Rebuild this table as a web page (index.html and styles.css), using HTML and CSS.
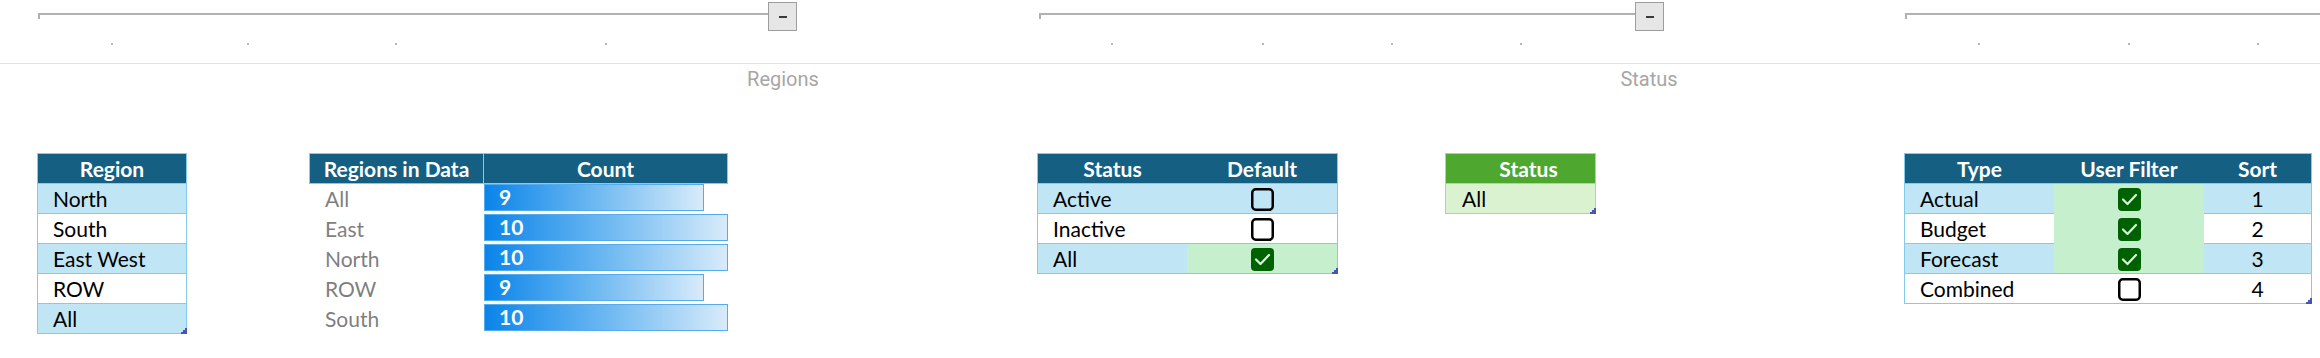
FILE: index.html
```html
<!DOCTYPE html>
<html>
<head>
<meta charset="utf-8">
<link rel="stylesheet" href="styles.css">
</head>
<body>
<div class="outline">
  <div class="bars">
    <div class="grp g1"><div class="ln"></div><div class="btn"><span></span></div></div>
    <div class="grp g2"><div class="ln"></div><div class="btn"><span></span></div></div>
    <div class="grp g3"><div class="ln"></div></div>
  </div>
  <div class="dots cols">
    <i></i><i class="d"></i><i class="d"></i><i class="d"></i><i class="d"></i><i></i>
    <i class="d"></i><i class="d"></i><i class="d"></i><i class="d"></i><i></i>
    <i class="d"></i><i class="d"></i><i class="d"></i><i></i>
  </div>
</div>
<div class="labels">
  <span class="lbl l1">Regions</span>
  <span class="lbl l2">Status</span>
</div>

<div class="tables cols">
  <div class="tbl t-region">
    <div class="hd"><div class="c ctr">Region</div></div>
    <div class="r band"><div class="c">North</div></div>
    <div class="r"><div class="c">South</div></div>
    <div class="r band"><div class="c">East West</div></div>
    <div class="r"><div class="c">ROW</div></div>
    <div class="r band"><div class="c">All</div></div>
    <span class="handle"><svg width="6" height="6" viewBox="0 0 6 6"><polygon points="6,0 6,6 0,6 0,4 2,4 2,2 4,2 4,0" fill="#4654b4"/></svg></span>
  </div>

  <div class="t-data">
    <div class="hd2"><div class="c ctr sep">Regions in Data</div><div class="c ctr">Count</div></div>
    <div class="dr"><div class="c gray">All</div><div class="barcell"><div class="bar" style="width:90%">9</div></div></div>
    <div class="dr"><div class="c gray">East</div><div class="barcell"><div class="bar" style="width:100%">10</div></div></div>
    <div class="dr"><div class="c gray">North</div><div class="barcell"><div class="bar" style="width:100%">10</div></div></div>
    <div class="dr"><div class="c gray">ROW</div><div class="barcell"><div class="bar" style="width:90%">9</div></div></div>
    <div class="dr"><div class="c gray">South</div><div class="barcell"><div class="bar" style="width:100%">10</div></div></div>
  </div>

  <div class="tbl t-status">
    <div class="hd"><div class="c ctr">Status</div><div class="c ctr">Default</div></div>
    <div class="r band"><div class="c">Active</div><div class="cb"><svg width="23" height="23" viewBox="0 0 23 23"><rect x="1.25" y="1.25" width="20.5" height="20.5" rx="3.5" fill="none" stroke="#000" stroke-width="2.5"/></svg></div></div>
    <div class="r"><div class="c">Inactive</div><div class="cb"><svg width="23" height="23" viewBox="0 0 23 23"><rect x="1.25" y="1.25" width="20.5" height="20.5" rx="3.5" fill="none" stroke="#000" stroke-width="2.5"/></svg></div></div>
    <div class="r band"><div class="c">All</div><div class="cb good"><svg width="23" height="23" viewBox="0 0 23 23"><rect x="0" y="0" width="23" height="23" rx="4" fill="#006100"/><polyline points="5,11.5 9.5,16 18,7" fill="none" stroke="#d9f2dc" stroke-width="2.2" stroke-linecap="round" stroke-linejoin="round"/></svg></div></div>
    <span class="handle"><svg width="6" height="6" viewBox="0 0 6 6"><polygon points="6,0 6,6 0,6 0,4 2,4 2,2 4,2 4,0" fill="#4654b4"/></svg></span>
  </div>

  <div class="tbl t-green">
    <div class="hd"><div class="c ctr">Status</div></div>
    <div class="r"><div class="c">All</div></div>
    <span class="handle"><svg width="6" height="6" viewBox="0 0 6 6"><polygon points="6,0 6,6 0,6 0,4 2,4 2,2 4,2 4,0" fill="#4654b4"/></svg></span>
  </div>

  <div class="tbl t-type">
    <div class="hd"><div class="c ctr">Type</div><div class="c ctr">User Filter</div><div class="c ctr">Sort</div></div>
    <div class="r band"><div class="c">Actual</div><div class="cb good joined"><svg width="23" height="23" viewBox="0 0 23 23"><rect x="0" y="0" width="23" height="23" rx="4" fill="#006100"/><polyline points="5,11.5 9.5,16 18,7" fill="none" stroke="#d9f2dc" stroke-width="2.2" stroke-linecap="round" stroke-linejoin="round"/></svg></div><div class="c ctr num">1</div></div>
    <div class="r"><div class="c">Budget</div><div class="cb good joined"><svg width="23" height="23" viewBox="0 0 23 23"><rect x="0" y="0" width="23" height="23" rx="4" fill="#006100"/><polyline points="5,11.5 9.5,16 18,7" fill="none" stroke="#d9f2dc" stroke-width="2.2" stroke-linecap="round" stroke-linejoin="round"/></svg></div><div class="c ctr num">2</div></div>
    <div class="r band"><div class="c">Forecast</div><div class="cb good"><svg width="23" height="23" viewBox="0 0 23 23"><rect x="0" y="0" width="23" height="23" rx="4" fill="#006100"/><polyline points="5,11.5 9.5,16 18,7" fill="none" stroke="#d9f2dc" stroke-width="2.2" stroke-linecap="round" stroke-linejoin="round"/></svg></div><div class="c ctr num">3</div></div>
    <div class="r"><div class="c">Combined</div><div class="cb"><svg width="23" height="23" viewBox="0 0 23 23"><rect x="1.25" y="1.25" width="20.5" height="20.5" rx="3.5" fill="none" stroke="#000" stroke-width="2.5"/></svg></div><div class="c ctr num">4</div></div>
    <span class="handle"><svg width="6" height="6" viewBox="0 0 6 6"><polygon points="6,0 6,6 0,6 0,4 2,4 2,2 4,2 4,0" fill="#4654b4"/></svg></span>
  </div>
</div>
</body>
</html>
```

FILE: styles.css
```css
body {
  margin: 0;
  background: #ffffff;
  font-family: Lato, "Liberation Sans", sans-serif;
  color: #000000;
}

.cols {
  display: grid;
  grid-template-columns: 37px 150px 122px 174px 245px 309px 150px 151px 107px 151px 308px 150px 150px 108px 8px;
}

/* ---------- outline strip ---------- */
.outline {
  height: 63px;
  border-bottom: 1px solid #e3e3e3;
}

.bars {
  display: flex;
  padding-top: 2px;
  height: 29px;
}

.grp {
  display: flex;
  align-items: flex-start;
}

.g1 { margin-left: 38px; width: 759px; }
.g2 { margin-left: 242px; width: 625px; }
.g3 { margin-left: 241px; flex: 1; }

.ln {
  flex: 1;
  height: 4px;
  margin-top: 11px;
  border-top: 2px solid #b2b2b2;
  border-left: 2px solid #b2b2b2;
}

.btn {
  width: 29px;
  height: 29px;
  box-sizing: border-box;
  border: 1px solid #9d9d9d;
  background: #e6e6e6;
  display: flex;
  align-items: center;
  justify-content: center;
}

.btn span {
  width: 8px;
  height: 2px;
  background: #3a3a3a;
}

.dots {
  margin-top: 12px;
  height: 2px;
}

.dots i {
  justify-self: center;
  width: 2px;
  height: 2px;
}

.dots i.d { background: #b5b5b5; }

/* ---------- labels ---------- */
.labels {
  display: flex;
  padding-top: 3px;
  height: 24px;
}

.lbl {
  font-family: Roboto, "Liberation Sans", sans-serif;
  font-size: 20px;
  line-height: 24px;
  color: #a6a6a6;
  text-align: center;
  width: 100px;
}

.l1 { margin-left: 733px; }
.l2 { margin-left: 766px; }

/* ---------- tables ---------- */
.tables {
  margin-top: 62px;
  align-items: start;
}

.tbl {
  position: relative;
  border: 1px solid #83caeb;
}

.t-region { grid-column: 2; }
.t-data { grid-column: 4 / 6; }
.t-status { grid-column: 7 / 9; }
.t-green { grid-column: 10; }
.t-type { grid-column: 12 / 15; }

.hd, .r {
  display: grid;
  height: 29px;
  border-bottom: 1px solid #83caeb;
}

.r:last-of-type { border-bottom: none; }

.hd {
  background: #156082;
  color: #ffffff;
  font-weight: 700;
}

.band { background: #c0e6f5; }

.c {
  padding-left: 15px;
  font-size: 21px;
  line-height: 29px;
  white-space: nowrap;
}

.ctr {
  padding-left: 0;
  text-align: center;
}

.t-status .hd, .t-status .r { grid-template-columns: 149px 1fr; }
.t-type .hd, .t-type .r { grid-template-columns: 149px 150px 1fr; }

.t-green { border-color: #a4dc90; }
.t-green .hd { background: #4ea72e; border-bottom-color: #a4dc90; }
.t-green .r { background: #daf2d0; }
.t-green .c { padding-left: 16px; }

.cb {
  display: flex;
  justify-content: center;
  align-items: flex-start;
  padding-top: 4px;
  box-sizing: border-box;
}

.cb svg { display: block; }

.good { background: #c6efce; }
.joined { height: 30px; }

.handle {
  position: absolute;
  right: -1px;
  bottom: -1px;
  width: 6px;
  height: 6px;
}

.handle svg { display: block; }

/* data table with bars */
.hd2 {
  display: grid;
  grid-template-columns: 174px 1fr;
  height: 31px;
  box-sizing: border-box;
  border: 1px solid #83caeb;
  background: #156082;
  color: #ffffff;
  font-weight: 700;
}

.sep { border-right: 1px solid #83caeb; }

.dr {
  display: grid;
  grid-template-columns: 175px 1fr;
  height: 30px;
}

.gray {
  color: #7f7f7f;
  padding-left: 16px;
}

.barcell { padding-top: 0; }

.bar {
  height: 27px;
  box-sizing: border-box;
  border: 1px solid #56abef;
  background: linear-gradient(90deg, #0a84ea 0%, #6cb8f1 50%, #d8ebfa 100%);
  color: #ffffff;
  font-weight: 700;
  font-size: 21px;
  line-height: 24px;
  padding-left: 14px;
}
```
